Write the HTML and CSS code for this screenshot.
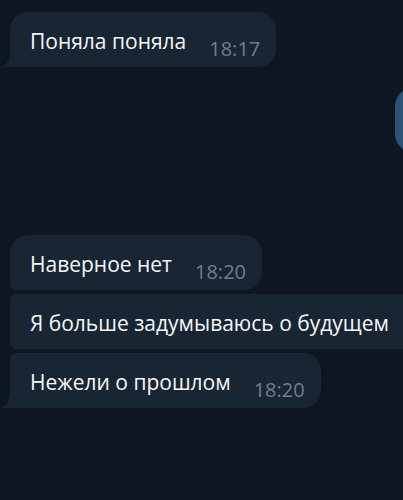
FILE: index.html
```html
<!doctype html>
<html>
<head>
<meta charset="utf-8">
<title>Чат</title>
<link rel="stylesheet" href="styles.css">
</head>
<body>
<div class="chat">
	<div class="row">
		<div class="msg in tail">
			<span class="text">Поняла поняла</span>
			<span class="time">18:17</span>
		</div>
	</div>
	<div class="row out_row">
		<div class="msg out"></div>
	</div>
	<div class="group">
		<div class="row">
			<div class="msg in first">
				<span class="text">Наверное нет</span>
				<span class="time">18:20</span>
			</div>
		</div>
		<div class="row">
			<div class="msg in mid wide">
				<span class="text">Я больше задумываюсь о будущем</span>
			</div>
		</div>
		<div class="row">
			<div class="msg in last tail">
				<span class="text">Нежели о прошлом</span>
				<span class="time">18:20</span>
			</div>
		</div>
	</div>
</div>
</body>
</html>
```

FILE: styles.css
```css
*{ margin:0; padding:0; box-sizing:border-box;}
html,body{ width:403px; height:500px; overflow:hidden; background:#0e1621;}
body{ font-family:"Open Sans","Noto Sans",sans-serif; color:#f7f7f7;}

.chat{ display:flex; flex-direction:column; padding:12px 0 0 10px;}
.row{ display:flex;}
.group{ display:flex; flex-direction:column; gap:4px; margin-top:83px;}

.msg{ position:relative; display:flex; align-items:flex-end; flex-shrink:0; white-space:nowrap; background:#182533; border-radius:18px; padding:17px 16px 6px 20px;}
.msg .text{ font-size:21px; line-height:24px; margin-bottom:8px;}
.msg .time{ font-size:20px; line-height:24px; color:#6d7f8f; margin-left:23px;}

.msg.first{ border-bottom-left-radius:6px;}
.msg.mid{ border-top-left-radius:6px; border-bottom-left-radius:6px;}
.msg.last{ border-top-left-radius:6px;}
.msg.wide{ padding-right:60px;}
.msg.tail{ border-bottom-left-radius:0;}
.msg.tail::before{ content:""; position:absolute; left:-9px; bottom:0; width:9px; height:15px; background:radial-gradient(ellipse 9px 15px at 0 0, transparent 97%, #182533 100%);}

.out_row{ margin-top:21px; padding-left:385px;}
.msg.out{ width:120px; height:64px; background:#2b5278;}
```
